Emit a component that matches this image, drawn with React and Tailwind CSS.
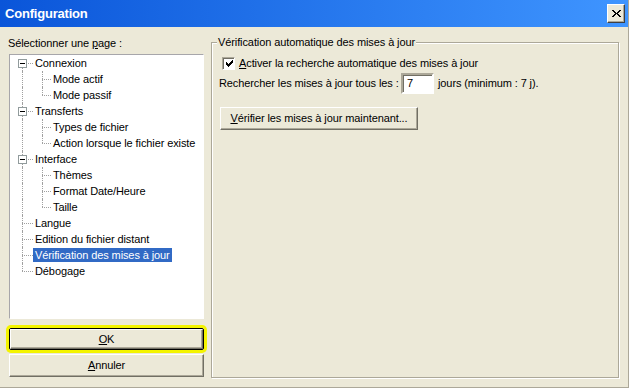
import React from 'react';

/* Boîte de dialogue "Configuration" — style Windows XP classique */

const TREE = [
  { label: 'Connexion', children: ['Mode actif', 'Mode passif'] },
  { label: 'Transferts', children: ['Types de fichier', 'Action lorsque le fichier existe'] },
  { label: 'Interface', children: ['Thèmes', 'Format Date/Heure', 'Taille'] },
  { label: 'Langue' },
  { label: 'Edition du fichier distant' },
  { label: 'Vérification des mises à jour', selected: true },
  { label: 'Débogage' },
];

function rows() {
  const out = [];
  TREE.forEach((n, i) => {
    out.push({ label: n.label, level: 0, first: i === 0, last: i === TREE.length - 1, expandable: !!n.children, selected: n.selected });
    (n.children || []).forEach((c, j) => {
      out.push({ label: c, level: 1, lastChild: j === n.children.length - 1 });
    });
  });
  return out;
}

function PixelGlyph({ pattern, className }) {
  const w = pattern[0].length;
  const h = pattern.length;
  return (
    <svg width={w} height={h} viewBox={`0 0 ${w} ${h}`} className={className} shapeRendering="crispEdges">
      {pattern.flatMap((line, y) =>
        line.split('').map((ch, x) => (ch === 'X' ? <rect key={`${x}-${y}`} x={x} y={y} width="1" height="1" fill="#000" /> : null))
      )}
    </svg>
  );
}

const CHECK = ['......X', '.....XX', 'X...XXX', 'XX.XXX.', 'XXXXX..', '.XXX...', '..X....'];
const CLOSE = ['XX.....XX', '.XX...XX.', '..XX.XX..', '...XXX...', '..XX.XX..', '.XX...XX.', 'XX.....XX'];

function TreeRow({ r }) {
  return (
    <div className="flex h-[16px] items-center">
      <div className="relative h-[16px] w-[22px] shrink-0">
        <div className={`absolute left-[11px] w-0 border-l border-dotted border-[#a0a0a0] ${r.level === 0 && r.first ? 'top-[8px]' : 'top-0'} ${r.level === 0 && r.last ? 'bottom-[8px]' : 'bottom-0'}`} />
        {r.level === 0 && <div className="absolute left-[11px] top-[8px] h-0 w-[11px] border-t border-dotted border-[#a0a0a0]" />}
        {r.expandable && (
          <div className="absolute left-[7px] top-[4px] flex h-[9px] w-[9px] items-center justify-center border border-[#919b9c] bg-white">
            <div className="h-px w-[5px] bg-black" />
          </div>
        )}
      </div>
      {r.level === 1 && (
        <div className="relative h-[16px] w-[18px] shrink-0">
          <div className={`absolute left-[9px] top-0 w-0 border-l border-dotted border-[#a0a0a0] ${r.lastChild ? 'bottom-[8px]' : 'bottom-0'}`} />
          <div className="absolute left-[9px] top-[8px] h-0 w-[9px] border-t border-dotted border-[#a0a0a0]" />
        </div>
      )}
      <span className={`h-[14px] whitespace-nowrap px-[2px] leading-[14px] ${r.selected ? 'bg-[#316ac5] text-white' : 'text-black'}`}>{r.label}</span>
    </div>
  );
}

function XPButton({ children, className = '' }) {
  return (
    <div className={`flex items-center justify-center border border-t-white border-l-white border-r-[#716f64] border-b-[#716f64] bg-[#ece9d8] shadow-[inset_-1px_-1px_0_#aca899] ${className}`}>
      {children}
    </div>
  );
}

export default function App() {
  return (
    <div className="flex h-[388px] w-[629px] flex-col overflow-hidden border-r border-b border-[#aca899] bg-[#ece9d8] font-['Liberation_Sans',Arial,sans-serif] text-[11px] tracking-[-0.1px] text-black">
      {/* Barre de titre */}
      <div className="flex h-[27px] shrink-0 items-center justify-between bg-gradient-to-r from-[#0a55d9] to-[#3f95ff] pl-[5px] pr-[3px]">
        <span className="text-[13px] font-bold tracking-[-0.2px] text-white">Configuration</span>
        <div className="flex h-[19px] w-[18px] items-center justify-center border border-t-white border-l-white border-r-[#404040] border-b-[#404040] bg-[#ece9d8] shadow-[inset_-1px_-1px_0_#aca899]">
          <PixelGlyph pattern={CLOSE} />
        </div>
      </div>

      <div className="flex flex-1">
        {/* Colonne gauche */}
        <div className="flex w-[204px] shrink-0 flex-col pl-[9px] pt-[9px]">
          <div className="-ml-px h-[14px] leading-[14px]">
            Sélectionner une <u>p</u>age :
          </div>
          <div className="mt-[4px] h-[265px] border border-t-[#a7a6aa] border-l-[#a7a6aa] border-r-white border-b-white bg-white pl-px">
            {rows().map((r, i) => (
              <TreeRow key={i} r={r} />
            ))}
          </div>
          <div className="mt-[9px] rounded-[2px] border border-black ring-[3px] ring-[#f4f400]">
            <XPButton className="h-[20px]">
              <span><u>O</u>K</span>
            </XPButton>
          </div>
          <XPButton className="mt-[4px] h-[23px]">
            <span><u>A</u>nnuler</span>
          </XPButton>
        </div>

        {/* Groupe de droite */}
        <div className="relative ml-[7px] mt-[15px] h-[336px] w-[408px] border border-[#aca899] pl-[7px] shadow-[inset_1px_1px_0_#fff,1px_1px_0_#fff]">
          <span className="absolute left-[5px] top-[-8px] bg-[#ece9d8] px-[1px] leading-[14px]">Vérification automatique des mises à jour</span>

          <div className="mt-[12px] flex h-[16px] items-center">
            <div className="ml-[3px] flex h-[13px] w-[13px] items-center justify-center border border-t-[#aca899] border-l-[#aca899] border-r-white border-b-white bg-white shadow-[inset_1px_1px_0_#716f64]">
              <PixelGlyph pattern={CHECK} className="ml-px mt-px" />
            </div>
            <span className="ml-[4px]"><u>A</u>ctiver la recherche automatique des mises à jour</span>
          </div>

          <div className="mt-[2px] flex h-[21px] items-center">
            <span className="w-[182px] shrink-0 whitespace-nowrap">Rechercher les mises à jour tous les :</span>
            <div className="flex h-[21px] w-[33px] items-center border-2 border-t-[#aca899] border-l-[#aca899] border-r-white border-b-white bg-white pl-[4px] shadow-[inset_1px_1px_0_#716f64]">
              7
            </div>
            <span className="ml-[4px]">jours (minimum : 7 j).</span>
          </div>

          <XPButton className="ml-px mt-[13px] h-[23px] w-[198px]">
            <span><u>V</u>érifier les mises à jour maintenant...</span>
          </XPButton>
        </div>
      </div>
    </div>
  );
}
